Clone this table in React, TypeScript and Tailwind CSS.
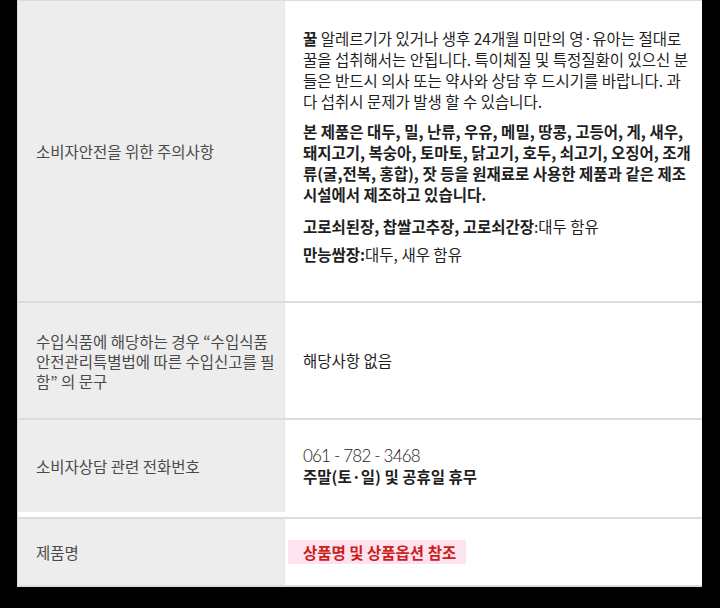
const KR = "font-['Noto_Sans_CJK_KR','Noto_Sans',sans-serif]";

function Row({
  label,
  children,
  className,
  right = "items-center",
}: {
  label: React.ReactNode;
  children: React.ReactNode;
  className: string;
  right?: string;
}) {
  return (
    <div className={`flex border-b-2 border-[#dcdcdc] ${className}`}>
      <div className="w-[267px] shrink-0 flex items-center bg-[#ededed] border-r border-[#e4e4e4] pl-[18px] pr-[8px] text-[15.5px] leading-[20px] text-[#4a4a4a]">
        <div>{label}</div>
      </div>
      <div className={`flex-1 flex pl-[18px] pr-[12px] text-[15.5px] leading-[21px] text-[#1f1f1f] ${right}`}>
        <div className="w-full">{children}</div>
      </div>
    </div>
  );
}

export default function App() {
  return (
    <div className={`w-[720px] h-[608px] bg-black pl-[17px] pr-[18px] ${KR}`}>
      <div className="bg-white border-t border-l border-[#dcdcdc]">
        {/* 주의사항 */}
        <Row
          label="소비자안전을 위한 주의사항"
          className="h-[302px]"
          right="items-start pt-[27px]"
        >
          <p className="whitespace-nowrap">
            <b>꿀</b> 알레르기가 있거나 생후 24개월 미만의 영·유아는 절대로
            <br />
            꿀을 섭취해서는 안됩니다. 특이체질 및 특정질환이 있으신 분
            <br />
            들은 반드시 의사 또는 약사와 상담 후 드시기를 바랍니다. 과
            <br />
            다 섭취시 문제가 발생 할 수 있습니다.
          </p>
          <p className="mt-[9px] font-bold whitespace-nowrap">
            본 제품은 대두, 밀, 난류, 우유, 메밀, 땅콩, 고등어, 게, 새우,
            <br />
            돼지고기, 복숭아, 토마토, 닭고기, 호두, 쇠고기, 오징어, 조개
            <br />
            류(굴,전복, 홍합), 잣 등을 원재료로 사용한 제품과 같은 제조
            <br />
            시설에서 제조하고 있습니다.
          </p>
          <p className="mt-[11px]">
            <b>고로쇠된장, 찹쌀고추장, 고로쇠간장</b>:대두 함유
          </p>
          <p className="mt-[7px]">
            <b>만능쌈장:</b>대두, 새우 함유
          </p>
        </Row>

        {/* 수입식품 */}
        <Row
          label={
            <>
              수입식품에 해당하는 경우 “수입식품
              <br />
              안전관리특별법에 따른 수입신고를 필
              <br />
              함” 의 문구
            </>
          }
          className="h-[117px]"
        >
          <p>해당사항 없음</p>
        </Row>

        {/* 전화번호 */}
        <Row label="소비자상담 관련 전화번호" className="h-[99px] pb-[5px]">
          <p className="font-['Lato',sans-serif] font-light text-[17px] tracking-[-0.8px] text-[#1a1a1a]">
            061 - 782 - 3468
          </p>
          <p className="font-bold">주말(토·일) 및 공휴일 휴무</p>
        </Row>

        {/* 제품명 */}
        <Row label="제품명" className="h-[68px] border-b border-[#cfcfcf]">
          <p>
            <span className="ml-[-15px] pl-[15px] pr-[10px] py-[1px] bg-[#fde3f0] font-bold text-[#cc1f1a]">
              상품명 및 상품옵션 참조
            </span>
          </p>
        </Row>
      </div>
    </div>
  );
}
